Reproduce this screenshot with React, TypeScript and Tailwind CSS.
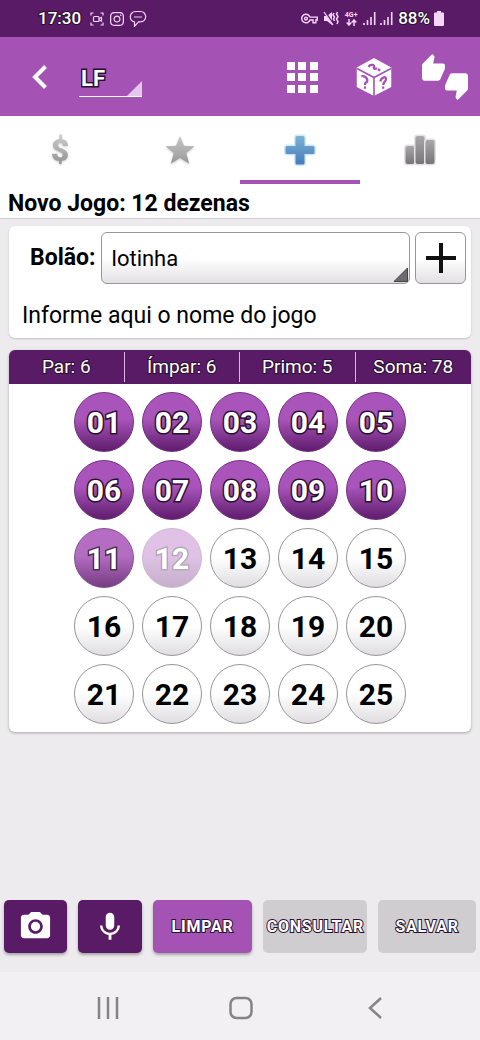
import { useState } from "react";
import type { ReactNode } from "react";
import { MdCameraAlt, MdMic, MdOutlineVpnKey, MdThumbsUpDown } from "react-icons/md";
import { FaInstagram } from "react-icons/fa";

const OUTLINE = "text-white [-webkit-text-stroke:3px_#2a1030] [paint-order:stroke_fill]";
const THIN_OUTLINE = "text-white [-webkit-text-stroke:2px_#2a1030] [paint-order:stroke_fill]";

function StatusBar() {
  return (
    <div className="flex h-[37px] items-center bg-[#591a66] pl-[38px] pr-9 text-[#f6d5fb]">
      <span className={"text-[17px] font-medium " + THIN_OUTLINE}>17:30</span>
      <svg className="ml-2 h-4 w-4" viewBox="0 0 16 16" fill="none" stroke="currentColor" strokeWidth="1.2">
        <path d="M2 4.500V2h2.500M11.500 2H14v2.500M14 11.500V14h-2.500M4.500 14H2v-2.500" />
        <rect x="4.500" y="5.500" width="5.500" height="5" rx="1" />
        <path d="M10 7.500l2.500-1v3.500l-2.500-1" />
      </svg>
      <FaInstagram className="ml-1 h-4 w-4" />
      <svg className="ml-1 h-[18px] w-[18px]" viewBox="0 0 18 18" fill="none" stroke="currentColor" strokeWidth="1.2">
        <path d="M6.500 1.500h5a5.200 5.200 0 0 1 5.200 5.200a5.200 5.200 0 0 1-5.200 5.200h-2l-4 4.500v-4.600A5.200 5.200 0 0 1 1.300 6.700a5.200 5.200 0 0 1 5.200-5.200z" strokeLinejoin="round" />
        <path d="M5 7h8" strokeOpacity=".8" />
      </svg>
      <div className="ml-auto flex items-center">
        <MdOutlineVpnKey className="h-[17px] w-[17px]" />
        <svg className="ml-[5px] h-[15px] w-4" viewBox="0 0 16 15" fill="currentColor">
          <path d="M1 5h3l5-4v13L4 10H1z" />
          <path d="M2 1l9 13" stroke="#591a66" strokeWidth="2" />
          <path d="M1 1l9 13" fill="none" stroke="currentColor" strokeWidth="1.300" />
          <path d="M11 2l-1 2l1.500 2L10.500 8l1 2M14.500 1l-1 2l1.500 2.500L13.500 8l1.500 2.500L14 13" fill="none" stroke="currentColor" strokeWidth="1.500" />
        </svg>
        <div className="ml-1 flex w-4 flex-col items-center">
          <span className="text-[7px] leading-[7px] font-bold">4G+</span>
          <svg className="h-[7px] w-[11px]" viewBox="0 0 11 7" fill="none" stroke="currentColor" strokeWidth="1.500">
            <path d="M3 0v6M.7 3.500L3 6l2.300-2.500M8 7V1M5.700 3.500L8 1l2.300 2.500" />
          </svg>
        </div>
        <Signal />
        <Signal />
        <span className={"ml-[5px] text-[17px] font-medium " + THIN_OUTLINE}>88%</span>
        <svg className="ml-1 h-[15px] w-[10px]" viewBox="0 0 10 15" fill="currentColor">
          <path d="M3 0h4v1.500h1.800A1 1 0 0 1 10 2.500V14a1 1 0 0 1-1 1H1a1 1 0 0 1-1-1V2.500a1 1 0 0 1 1-1h2z" />
        </svg>
      </div>
    </div>
  );
}

function Signal() {
  return (
    <svg className="ml-1 h-[13px] w-[13px]" viewBox="0 0 13 13" stroke="currentColor" strokeWidth="1.600">
      <path d="M1 13v-2M4.500 13V8M8 13V5M11.700 13V0" />
    </svg>
  );
}

function DiceIcon() {
  return (
    <svg className="h-[38px] w-9" viewBox="0 0 36 38">
      <path
        d="M18 1L34.500 10v18.500L18 37L1.500 28.500V10z"
        fill="#fff"
        stroke="#fff"
        strokeWidth="1.500"
        strokeLinejoin="round"
      />
      <path d="M1 10.500l17 9l17-9M18 19.500V38" fill="none" stroke="#a552b5" strokeWidth="1.600" />
      <g fill="none" stroke="#a552b5" strokeWidth="2.300">
        <path d="M5.500 18.500c.8-1.500 6.200 1 5.800 4.300c-.3 2.200-2.600 1.300-2.400 4.200M9 28.500v2.300" />
        <path d="M24.500 23.500c.2-4 6-6 5.500-2.200c-.3 2.700-2.900 2.700-2.700 5.700M27.200 28.500v2.300" />
        <path d="M12.500 8.800c1.800-3 6.700-2 5.600.3c-.8 1.600.5 2.200 3 1.200M21.800 11.300l2.400 1.100" />
      </g>
    </svg>
  );
}

function TopBar() {
  return (
    <header className="flex h-[79px] items-center bg-[#a552b5] pr-3 pl-8 text-white">
      <button aria-label="Voltar">
        <svg className="h-6 w-[15px]" viewBox="0 0 15 24" fill="none" stroke="#fff" strokeWidth="4">
          <path d="M13.500 1.500L3 12l10.500 10.500" />
        </svg>
      </button>
      <div className="relative ml-8 h-[41px] w-[63px] border-b border-white">
        <select
          aria-label="Loteria"
          className={"h-full w-full appearance-none bg-transparent pt-1 pl-[2px] text-[22px] font-bold outline-none " + OUTLINE}
        >
          <option>LF</option>
        </select>
        <svg className="pointer-events-none absolute right-0 bottom-0 h-[15px] w-[15px]" viewBox="0 0 15 15">
          <path d="M15 0v15H0z" fill="#e4c8ea" />
        </svg>
      </div>
      <div className="ml-auto flex items-center">
        <button aria-label="Grade">
          <svg className="h-8 w-8" viewBox="0 0 32 32" fill="#fff">
            <path d="M1 1h8v8H1zM12 1h8v8h-8zM24 1h8v8h-8zM1 12h8v8H1zM12 12h8v8h-8zM24 12h8v8h-8zM1 24h8v8H1zM12 24h8v8h-8zM24 24h8v8h-8z" />
          </svg>
        </button>
        <button aria-label="Aleatório" className="ml-[38px]">
          <DiceIcon />
        </button>
        <button aria-label="Avaliar" className="ml-[30px]">
          <MdThumbsUpDown className="h-[46px] w-[46px]" />
        </button>
      </div>
    </header>
  );
}

function Tab({ label, active, onClick, children }: { label: string; active: boolean; onClick: () => void; children: ReactNode }) {
  return (
    <button
      role="tab"
      aria-label={label}
      aria-selected={active}
      onClick={onClick}
      className={
        "flex h-[68px] flex-1 items-center justify-center border-b-4 pt-1 " +
        (active ? "border-[#a552b5]" : "border-transparent")
      }
    >
      {children}
    </button>
  );
}

function Tabs() {
  const [tab, setTab] = useState(2);
  return (
    <div role="tablist" className="flex">
      <svg className="absolute h-0 w-0" aria-hidden="true">
        <defs>
          <linearGradient id="light" x1="0" y1="0" x2="0" y2="1">
            <stop offset="0" stopColor="#c9c9c9" />
            <stop offset="1" stopColor="#989898" />
          </linearGradient>
          <linearGradient id="dark" x1="0" y1="0" x2="0" y2="1">
            <stop offset="0" stopColor="#a9a7a9" />
            <stop offset="1" stopColor="#777577" />
          </linearGradient>
          <linearGradient id="blue" x1="0" y1="0" x2="0" y2="1">
            <stop offset="0" stopColor="#7db2d2" />
            <stop offset="1" stopColor="#457cbc" />
          </linearGradient>
        </defs>
      </svg>
      <Tab label="Valores" active={tab === 0} onClick={() => setTab(0)}>
        <span className="bg-linear-to-b from-[#cfcfcf] to-[#8f8f8f] bg-clip-text text-[32px] leading-8 font-black text-transparent drop-shadow-[0_1px_1px_#ccc]">
          $
        </span>
      </Tab>
      <Tab label="Favoritos" active={tab === 1} onClick={() => setTab(1)}>
        <svg className="h-7 w-[30px] drop-shadow-[0_1px_1px_#ccc]" viewBox="0 0 30 28">
          <path
            d="M15 0l4 9.700l10.500.6l-8.200 6.700l2.900 10.700L15 22l-9.200 5.700l2.900-10.700L.500 10.300l10.500-.6z"
            fill="url(#light)"
          />
        </svg>
      </Tab>
      <Tab label="Novo jogo" active={tab === 2} onClick={() => setTab(2)}>
        <svg className="h-8 w-8" viewBox="0 0 32 32">
          <path
            d="M13 2h6a1.500 1.500 0 0 1 1.500 1.500V12H29a1.500 1.500 0 0 1 1.500 1.500v5A1.500 1.500 0 0 1 29 20h-8.500v9a1.500 1.500 0 0 1-1.500 1.500h-6a1.500 1.500 0 0 1-1.500-1.500v-9H3a1.500 1.500 0 0 1-1.500-1.500v-5A1.500 1.500 0 0 1 3 12h8.500V3.500A1.500 1.500 0 0 1 13 2z"
            fill="url(#blue)"
            stroke="#cfe9f7"
            strokeWidth="3"
            paintOrder="stroke"
          />
        </svg>
      </Tab>
      <Tab label="Estatísticas" active={tab === 3} onClick={() => setTab(3)}>
        <svg className="h-8 w-8" viewBox="0 0 32 32" fill="url(#dark)" stroke="#e4e2e4" strokeWidth="3" paintOrder="stroke">
          <rect x="1.500" y="12" width="9" height="18" rx="2" />
          <rect x="11.500" y="2" width="9" height="28" rx="2" />
          <rect x="21.500" y="6" width="9" height="24" rx="2" />
        </svg>
      </Tab>
    </div>
  );
}

function GameForm() {
  return (
    <section className="rounded-md bg-white pt-[6px] pr-[5px] shadow-[0_1px_2px_rgba(0,0,0,0.18)]">
      <div className="flex items-center gap-[5px]">
        <label htmlFor="bolao" className="pl-[21px] text-[23px] font-bold">
          Bolão:
        </label>
        <div className="relative flex-1">
          <select
            id="bolao"
            className="h-[52px] w-full appearance-none rounded-md border border-[#98949a] bg-linear-to-b from-white from-50% to-[#e2e0e3] px-[10px] text-[22px] text-black outline-none"
          >
            <option>lotinha</option>
          </select>
          <svg className="pointer-events-none absolute right-[2px] bottom-[2px] h-[15px] w-[15px]" viewBox="0 0 15 15">
            <path d="M14.500 1v13.500H1z" fill="#6d6b6e" stroke="#454346" />
          </svg>
        </div>
        <button
          aria-label="Adicionar bolão"
          className="flex h-[52px] w-[51px] items-center justify-center rounded-md border border-[#98949a] bg-linear-to-b from-white from-50% to-[#e2e0e3]"
        >
          <svg className="h-[30px] w-[30px]" viewBox="0 0 30 30" stroke="#111" strokeWidth="4">
            <path d="M15 0v30M0 15h30" />
          </svg>
        </button>
      </div>
      <input
        aria-label="Nome do jogo"
        placeholder="Informe aqui o nome do jogo"
        className="block h-[54px] w-full bg-transparent pt-2 pl-[13px] text-[23px] outline-none placeholder:text-black"
      />
    </section>
  );
}

const STATS = ["Par: 6", "Ímpar: 6", "Primo: 5", "Soma: 78"];

function ballStyle(n: number) {
  const filled = OUTLINE + " border-[#6e2f7c] bg-linear-to-b from-[#a954ba] from-45% to-[#5f1c6d]";
  if (n <= 10) return filled;
  if (n === 11) return filled + " opacity-85";
  if (n === 12) return filled + " opacity-35";
  return "border-[#98959a] bg-linear-to-b from-white from-50% to-[#dfdde0] text-black";
}

function Board() {
  return (
    <section className="overflow-hidden rounded-md bg-white shadow-[0_1px_3px_rgba(0,0,0,0.3)]">
      <div className="grid grid-cols-4 divide-x divide-[#d9b6df] bg-[#591a66] py-[2px]">
        {STATS.map((s) => (
          <span key={s} className={"text-center text-[19px] leading-[30px] " + THIN_OUTLINE}>
            {s}
          </span>
        ))}
      </div>
      <div className="grid grid-cols-[repeat(5,60px)] justify-center gap-2 py-2">
        {Array.from({ length: 25 }, (_, i) => i + 1).map((n) => (
          <button
            key={n}
            className={"flex h-[60px] w-[60px] items-center justify-center rounded-full border text-[30px] font-bold " + ballStyle(n)}
          >
            {String(n).padStart(2, "0")}
          </button>
        ))}
      </div>
    </section>
  );
}

const ACTION = "flex h-[53px] items-center justify-center rounded-[5px] text-[16px] font-bold tracking-wider whitespace-nowrap ";
const RAISED = "shadow-[0_2px_3px_rgba(0,0,0,0.3)] ";

function Actions() {
  return (
    <div className="grid grid-cols-[63fr_64fr_100fr_104fr_98fr] gap-[11px] px-1 pb-[19px]">
      <button aria-label="Câmera" className={ACTION + RAISED + "bg-[#591a66] text-white"}>
        <MdCameraAlt className="h-[35px] w-[35px]" />
      </button>
      <button aria-label="Microfone" className={ACTION + RAISED + "bg-[#591a66] text-white"}>
        <MdMic className="h-[34px] w-[34px]" />
      </button>
      <button className={ACTION + RAISED + THIN_OUTLINE + " bg-[#a552b5]"}>LIMPAR</button>
      <button className={ACTION + THIN_OUTLINE + " bg-[#cfcdd0]"}>CONSULTAR</button>
      <button className={ACTION + THIN_OUTLINE + " bg-[#cfcdd0]"}>SALVAR</button>
    </div>
  );
}

function SystemNav() {
  return (
    <nav className="flex h-[68px] items-center justify-around bg-[#f2f0f2] pt-[3px] pr-[39px] pl-[42px]">
      <button aria-label="Recentes">
        <svg className="h-[22px] w-[22px]" viewBox="0 0 22 22" stroke="#858386" strokeWidth="2.500">
          <path d="M2 0v22M11 0v22M20 0v22" />
        </svg>
      </button>
      <button aria-label="Início">
        <svg className="h-6 w-6" viewBox="0 0 24 24" fill="none" stroke="#858386" strokeWidth="2.500">
          <rect x="1.500" y="2" width="21" height="20" rx="6" />
        </svg>
      </button>
      <button aria-label="Voltar do sistema">
        <svg className="h-[22px] w-[22px]" viewBox="0 0 22 22" fill="none" stroke="#858386" strokeWidth="2.500">
          <path d="M17 1L6 11l11 10" />
        </svg>
      </button>
    </nav>
  );
}

export default function App() {
  return (
    <div className="flex min-h-screen flex-col bg-[#edebed] font-[Roboto,sans-serif] text-black">
      <StatusBar />
      <TopBar />
      <div className="border-b border-[#cfcdd0] bg-white">
        <Tabs />
        <h1 className="px-2 pt-[5px] text-[23px] leading-[29px] font-bold">Novo Jogo: 12 dezenas</h1>
      </div>
      <main className="flex flex-1 flex-col gap-3 px-[9px] py-[7px]">
        <GameForm />
        <Board />
      </main>
      <Actions />
      <SystemNav />
    </div>
  );
}
